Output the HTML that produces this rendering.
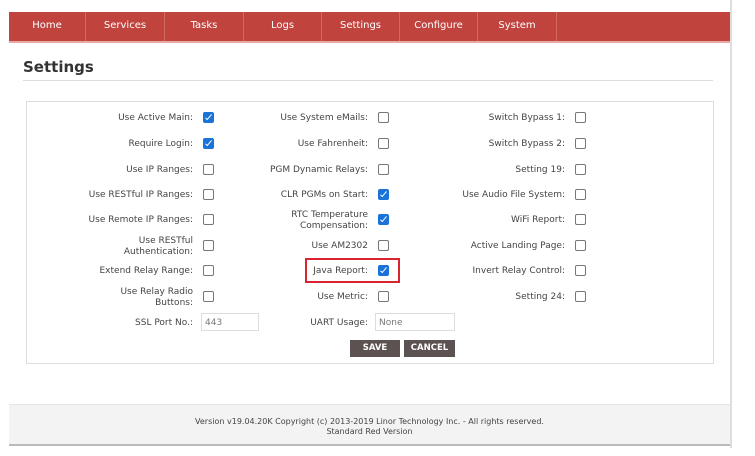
<!DOCTYPE html>
<html><head><meta charset="utf-8"><style>
body{margin:0;width:755px;height:456px;background:#fff;position:relative;overflow:hidden;font-family:"DejaVu Sans","Liberation Sans",sans-serif;}
.nav{position:absolute;left:9px;top:12px;width:721px;height:29px;background:#c0433e;border-bottom:2px solid #e7a9a3;}
.nav span{position:absolute;top:0;height:29px;line-height:28px;color:#fff;font-size:10px;text-align:center;border-right:1px solid #d16a63;}
.rb{position:absolute;left:730px;top:0;width:2px;height:448px;background:#ddd;}
h1{position:absolute;left:23px;top:58px;margin:0;font-size:15px;font-weight:bold;color:#333;font-family:"DejaVu Sans",sans-serif;}
.hr{position:absolute;left:23px;top:80px;width:690px;height:1px;background:#ddd;}
.panel{position:absolute;left:26px;top:101px;width:686px;height:261px;border:1px solid #ddd;}
.l{position:absolute;font-size:9px;color:#444;text-align:right;line-height:11px;margin-top:1px;}
.c{position:absolute;width:9px;height:9px;border:1px solid #777;border-radius:2px;background:#fff;}
.k{background:#1a73d9;border-color:#1a73d9;}
.k:after{content:"";position:absolute;left:3px;top:0px;width:2px;height:6px;border:solid #fff;border-width:0 1.5px 1.5px 0;transform:rotate(40deg);}
.in{position:absolute;height:18px;border:1px solid #ddd;font-size:9px;color:#777;line-height:18px;padding-left:3px;box-sizing:border-box;}
.btn{position:absolute;top:340px;height:17px;background:#5b5251;color:#fff;font-size:8.5px;font-weight:bold;text-align:center;line-height:17px;}
.foot{position:absolute;left:9px;top:404px;width:721px;background:#f3f3f3;border-top:1px solid #e5e5e5;border-bottom:2px solid #bbb;text-align:center;font-size:8px;color:#444;line-height:10px;padding-top:12px;box-sizing:border-box;height:42px;}
</style></head><body>
<div class="nav">
<span style="left:0;width:76px">Home</span>
<span style="left:77px;width:78px">Services</span>
<span style="left:156px;width:78px">Tasks</span>
<span style="left:235px;width:77px">Logs</span>
<span style="left:313px;width:77px">Settings</span>
<span style="left:391px;width:77px">Configure</span>
<span style="left:469px;width:78px">System</span>
</div>
<div class="rb"></div>
<h1>Settings</h1>
<div class="hr"></div>
<div class="panel"></div>

<div class="l" style="right:562px;top:112px">Use Active Main:</div><div class="c k" style="left:203px;top:112px"></div>
<div class="l" style="right:562px;top:138px">Require Login:</div><div class="c k" style="left:203px;top:138px"></div>
<div class="l" style="right:562px;top:164px">Use IP Ranges:</div><div class="c" style="left:203px;top:164px"></div>
<div class="l" style="right:562px;top:189px">Use RESTful IP Ranges:</div><div class="c" style="left:203px;top:189px"></div>
<div class="l" style="right:562px;top:214px">Use Remote IP Ranges:</div><div class="c" style="left:203px;top:214px"></div>
<div class="l" style="right:562px;top:235px">Use RESTful<br>Authentication:</div><div class="c" style="left:203px;top:240px"></div>
<div class="l" style="right:562px;top:265px">Extend Relay Range:</div><div class="c" style="left:203px;top:265px"></div>
<div class="l" style="right:562px;top:286px">Use Relay Radio<br>Buttons:</div><div class="c" style="left:203px;top:291px"></div>
<div class="l" style="right:562px;top:317px">SSL Port No.:</div><div class="in" style="left:201px;top:313px;width:58px">443</div>

<div class="l" style="right:387px;top:112px">Use System eMails:</div><div class="c" style="left:378px;top:112px"></div>
<div class="l" style="right:387px;top:138px">Use Fahrenheit:</div><div class="c" style="left:378px;top:138px"></div>
<div class="l" style="right:387px;top:164px">PGM Dynamic Relays:</div><div class="c" style="left:378px;top:164px"></div>
<div class="l" style="right:387px;top:189px">CLR PGMs on Start:</div><div class="c k" style="left:378px;top:189px"></div>
<div class="l" style="right:387px;top:209px">RTC Temperature<br>Compensation:</div><div class="c k" style="left:378px;top:214px"></div>
<div class="l" style="right:387px;top:240px">Use AM2302</div><div class="c" style="left:378px;top:240px"></div>
<div style="position:absolute;left:305px;top:258px;width:91px;height:21px;border:2px solid #d9232e"></div>
<div class="l" style="right:387px;top:265px">Java Report:</div><div class="c k" style="left:378px;top:265px"></div>
<div class="l" style="right:387px;top:291px">Use Metric:</div><div class="c" style="left:378px;top:291px"></div>
<div class="l" style="right:387px;top:317px">UART Usage:</div><div class="in" style="left:375px;top:313px;width:80px">None</div>

<div class="l" style="right:190px;top:112px">Switch Bypass 1:</div><div class="c" style="left:575px;top:112px"></div>
<div class="l" style="right:190px;top:138px">Switch Bypass 2:</div><div class="c" style="left:575px;top:138px"></div>
<div class="l" style="right:190px;top:164px">Setting 19:</div><div class="c" style="left:575px;top:164px"></div>
<div class="l" style="right:190px;top:189px">Use Audio File System:</div><div class="c" style="left:575px;top:189px"></div>
<div class="l" style="right:190px;top:214px">WiFi Report:</div><div class="c" style="left:575px;top:214px"></div>
<div class="l" style="right:190px;top:240px">Active Landing Page:</div><div class="c" style="left:575px;top:240px"></div>
<div class="l" style="right:190px;top:265px">Invert Relay Control:</div><div class="c" style="left:575px;top:265px"></div>
<div class="l" style="right:190px;top:291px">Setting 24:</div><div class="c" style="left:575px;top:291px"></div>

<div class="btn" style="left:350px;width:50px">SAVE</div>
<div class="btn" style="left:404px;width:51px">CANCEL</div>

<div class="foot">Version v19.04.20K Copyright (c) 2013-2019 Linor Technology Inc. - All rights reserved.<br>Standard Red Version</div>
</body></html>
